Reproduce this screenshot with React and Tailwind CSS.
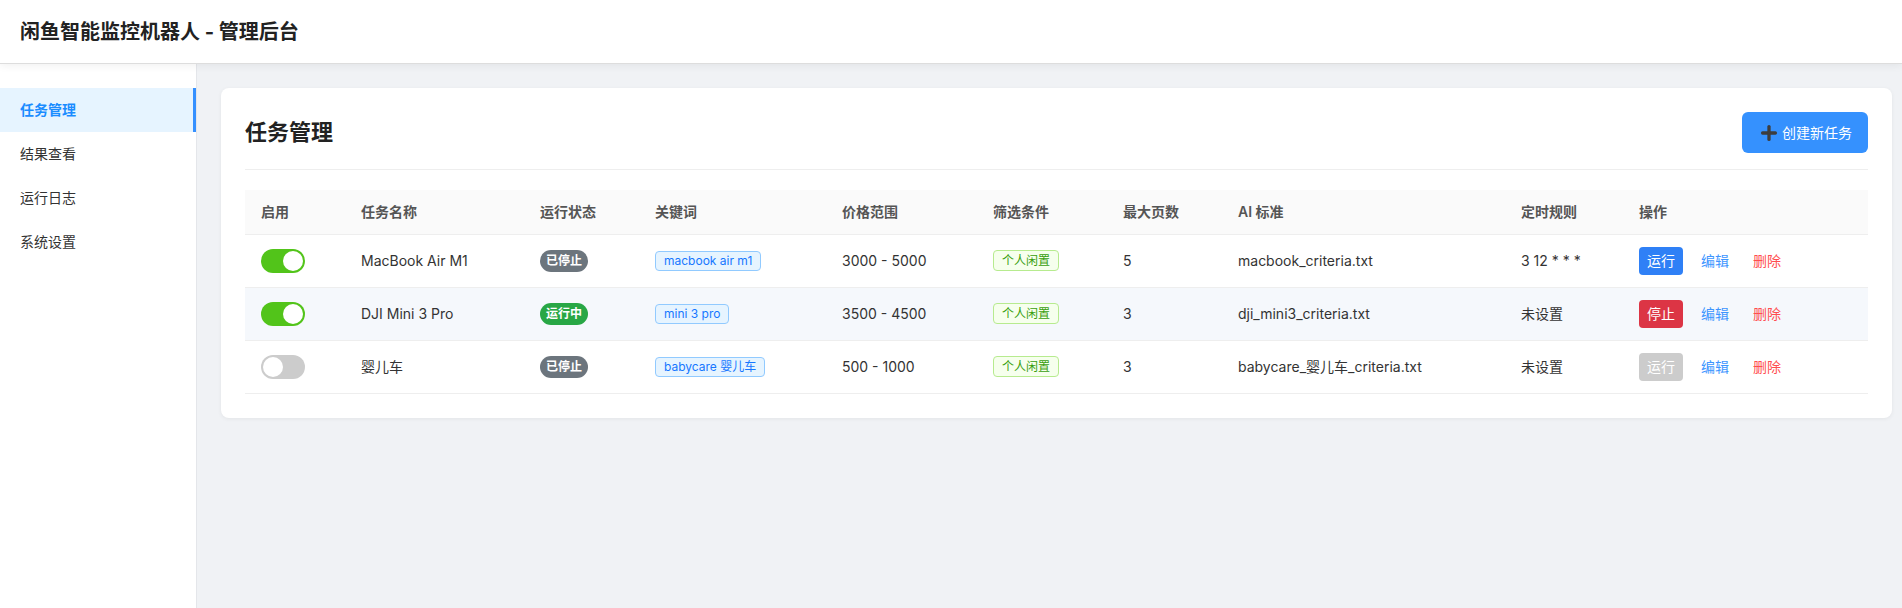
import React from 'react';
import { Plus } from 'lucide-react';

const tasks = [
    {
        enabled: true,
        name: 'MacBook Air M1',
        running: false,
        keyword: 'macbook air m1',
        price: '3000 - 5000',
        filter: '个人闲置',
        pages: 5,
        criteria: 'macbook_criteria.txt',
        cron: '3 12 * * *',
    },
    {
        enabled: true,
        name: 'DJI Mini 3 Pro',
        running: true,
        keyword: 'mini 3 pro',
        price: '3500 - 4500',
        filter: '个人闲置',
        pages: 3,
        criteria: 'dji_mini3_criteria.txt',
        cron: '未设置',
    },
    {
        enabled: false,
        name: '婴儿车',
        running: false,
        keyword: 'babycare 婴儿车',
        price: '500 - 1000',
        filter: '个人闲置',
        pages: 3,
        criteria: 'babycare_婴儿车_criteria.txt',
        cron: '未设置',
    },
];

const columns = [
    { label: '启用', w: 'w-[100px]' },
    { label: '任务名称', w: 'w-[179px]' },
    { label: '运行状态', w: 'w-[115px]' },
    { label: '关键词', w: 'w-[187px]' },
    { label: '价格范围', w: 'w-[151px]' },
    { label: '筛选条件', w: 'w-[130px]' },
    { label: '最大页数', w: 'w-[115px]' },
    { label: 'AI 标准', w: 'w-[283px]' },
    { label: '定时规则', w: 'w-[118px]' },
    { label: '操作', w: 'w-[245px]' },
];

const menu = ['任务管理', '结果查看', '运行日志', '系统设置'];

const Toggle = ({ on }) => (
    <div
        className={`w-11 h-6 rounded-full p-[2px] flex ${on ? 'bg-[#52c41a] justify-end' : 'bg-[#ccc] justify-start'}`}
    >
        <div className="w-5 h-5 rounded-full bg-white" />
    </div>
);

const App = () => {
    return (
        <div className="h-screen flex flex-col bg-white text-[#333] font-['Inter','Noto_Sans_CJK_SC',sans-serif]">
            {/* top bar */}
            <header className="h-16 shrink-0 flex items-center px-5 bg-white border-b border-[#ddd] shadow-[0_2px_8px_rgba(0,0,0,0.06)] z-10">
                <h1 className="text-xl font-bold text-[#222]">闲鱼智能监控机器人 - 管理后台</h1>
            </header>

            <div className="flex flex-1 min-h-0">
                {/* sidebar */}
                <aside className="w-[197px] shrink-0 bg-white border-r border-[#e4e6ea] pt-6">
                    {menu.map((item, i) => (
                        <div
                            key={item}
                            className={`h-11 flex items-center px-5 text-sm ${
                                i === 0
                                    ? 'bg-[#e6f4ff] text-[#1a8cff] font-semibold border-r-[3px] border-[#3590ff]'
                                    : 'text-[#333]'
                            }`}
                        >
                            {item}
                        </div>
                    ))}
                </aside>

                {/* content */}
                <main className="flex-1 bg-[#f0f2f5] pl-6 pr-[10px] pt-6">
                    <div className="bg-white rounded-lg shadow-[0_1px_4px_rgba(0,0,0,0.06)] px-6 pt-6 pb-6">
                        <div className="flex items-center justify-between pb-4 border-b border-[#eee]">
                            <h2 className="text-[22px] font-bold text-[#222]">任务管理</h2>
                            <button className="w-[126px] h-[41px] rounded-md bg-[#3591fe] text-white text-sm flex items-center justify-center gap-[2px]">
                                <Plus size={22} strokeWidth={3.6} className="text-[#3d3d3d]" />
                                创建新任务
                            </button>
                        </div>

                        <table className="w-full mt-5 table-fixed border-collapse text-sm">
                            <thead>
                                <tr className="bg-[#fafafa]">
                                    {columns.map((c) => (
                                        <th
                                            key={c.label}
                                            className={`${c.w} h-11 px-4 text-left font-semibold text-[#555] border-b border-[#eee]`}
                                        >
                                            {c.label}
                                        </th>
                                    ))}
                                </tr>
                            </thead>
                            <tbody>
                                {tasks.map((t, i) => (
                                    <tr key={t.name} className={i === 1 ? 'bg-[#f5f8fc]' : 'bg-white'}>
                                        <td className="h-[53px] px-4 border-b border-[#eee]">
                                            <Toggle on={t.enabled} />
                                        </td>
                                        <td className="px-4 border-b border-[#eee]">{t.name}</td>
                                        <td className="px-4 border-b border-[#eee]">
                                            <span
                                                className={`inline-flex items-center h-[22px] px-[6px] rounded-full text-xs font-bold text-white ${
                                                    t.running ? 'bg-[#28a745]' : 'bg-[#6c757d]'
                                                }`}
                                            >
                                                {t.running ? '运行中' : '已停止'}
                                            </span>
                                        </td>
                                        <td className="px-4 border-b border-[#eee]">
                                            <span className="inline-flex items-center h-5 px-2 rounded border border-[#91caff] bg-[#e6f4ff] text-xs text-[#1677ff]">
                                                {t.keyword}
                                            </span>
                                        </td>
                                        <td className="px-4 border-b border-[#eee]">{t.price}</td>
                                        <td className="px-4 border-b border-[#eee]">
                                            <span className="inline-flex items-center h-[21px] px-2 rounded border border-[#b7eb8f] bg-[#f6ffed] text-xs text-[#389e0d]">
                                                {t.filter}
                                            </span>
                                        </td>
                                        <td className="px-4 border-b border-[#eee]">{t.pages}</td>
                                        <td className="px-4 border-b border-[#eee]">{t.criteria}</td>
                                        <td className="px-4 border-b border-[#eee]">{t.cron}</td>
                                        <td className="px-4 border-b border-[#eee]">
                                            <div className="flex items-center">
                                                <button
                                                    className={`h-7 px-2 rounded text-sm text-white ${
                                                        !t.enabled
                                                            ? 'bg-[#ccc]'
                                                            : t.running
                                                            ? 'bg-[#dc3545]'
                                                            : 'bg-[#2f80f6]'
                                                    }`}
                                                >
                                                    {t.running ? '停止' : '运行'}
                                                </button>
                                                <span className="ml-[18px] text-[#3d95ff]">编辑</span>
                                                <span className="ml-6 text-[#ff4d4f]">删除</span>
                                            </div>
                                        </td>
                                    </tr>
                                ))}
                            </tbody>
                        </table>
                    </div>
                </main>
            </div>
        </div>
    );
};

export default App;
